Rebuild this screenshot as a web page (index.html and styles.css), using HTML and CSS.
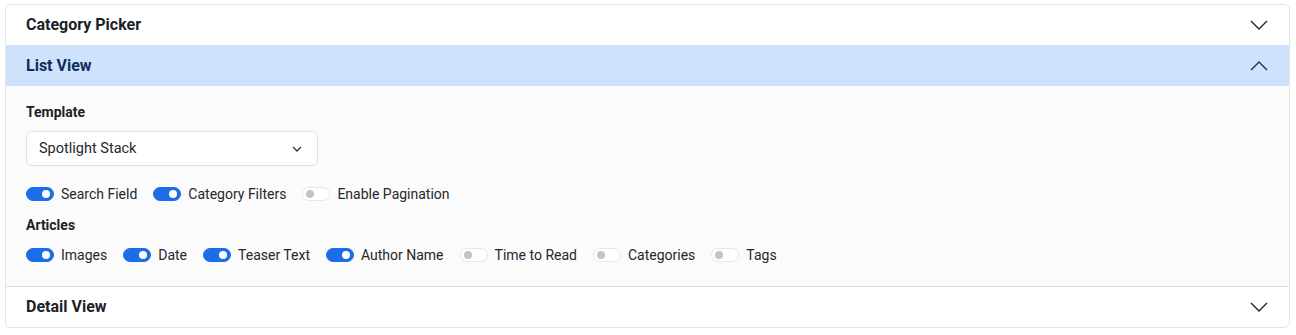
FILE: index.html
```html
<!DOCTYPE html>
<html lang="en">
  <head>
    <meta charset="UTF-8" />
    <meta name="viewport" content="width=device-width, initial-scale=1.0" />
    <title>Settings</title>
    <link rel="stylesheet" href="styles.css">
  </head>
  <body>
    <div class="panel">
      <!-- category picker -->
      <div class="section">
        <div class="head">
          <span>Category Picker</span>
          <svg class="chev" viewBox="0 0 18 10" width="18" height="10"><path d="M1 1l8 8 8-8" /></svg>
        </div>
      </div>
      <!-- list view -->
      <div class="section open">
        <div class="head">
          <span>List View</span>
          <svg class="chev" viewBox="0 0 18 10" width="18" height="10"><path d="M1 9l8-8 8 8" /></svg>
        </div>
        <div class="body">
          <div class="label">Template</div>
          <div class="select">
            <span>Spotlight Stack</span>
            <svg viewBox="0 0 10 6" width="10" height="6"><path d="M1 1l4 4 4-4" /></svg>
          </div>
          <div class="toggles">
            <label class="item"><span class="switch on"></span>Search Field</label>
            <label class="item"><span class="switch on"></span>Category Filters</label>
            <label class="item"><span class="switch"></span>Enable Pagination</label>
          </div>
          <div class="label articles">Articles</div>
          <div class="toggles">
            <label class="item"><span class="switch on"></span>Images</label>
            <label class="item"><span class="switch on"></span>Date</label>
            <label class="item"><span class="switch on"></span>Teaser Text</label>
            <label class="item"><span class="switch on"></span>Author Name</label>
            <label class="item"><span class="switch"></span>Time to Read</label>
            <label class="item"><span class="switch"></span>Categories</label>
            <label class="item"><span class="switch"></span>Tags</label>
          </div>
        </div>
      </div>
      <!-- detail view -->
      <div class="section">
        <div class="head">
          <span>Detail View</span>
          <svg class="chev" viewBox="0 0 18 10" width="18" height="10"><path d="M1 1l8 8 8-8" /></svg>
        </div>
      </div>
    </div>
  </body>
</html>
```

FILE: styles.css
```css
* {
  margin: 0;
  padding: 0;
  box-sizing: border-box;
}
body {
  padding: 4px 6px 0 5px;
  background-color: #fff;
  font-family: Roboto, "Liberation Sans", sans-serif;
  color: #1f2328;
}
.panel {
  border: 1px solid #e3e5e8;
  border-radius: 6px;
  overflow: hidden;
  background-color: #fff;
}
.open + .section {
  border-top: 1px solid #dcdfe3;
}
.head {
  display: flex;
  justify-content: space-between;
  align-items: center;
  height: 40px;
  padding: 0 21px 0 20px;
  font-size: 16px;
  line-height: 20px;
  font-weight: 700;
  color: #1d2127;
}
.open .head {
  height: 41px;
  background-color: #cfe2fc;
  color: #0f2c5e;
}
.chev path {
  fill: none;
  stroke: #22262b;
  stroke-width: 1.4;
}
.open .chev path {
  stroke: #18305a;
}
.body {
  background-color: #fbfbfb;
  padding: 18px 20px 23px;
}
.label {
  font-size: 14px;
  font-weight: 700;
  color: #1d2127;
  line-height: 16px;
}
.select {
  display: flex;
  justify-content: space-between;
  align-items: center;
  width: 292px;
  height: 35px;
  margin-top: 11px;
  padding: 0 15px 0 12px;
  background-color: #fff;
  border: 1px solid #dfe1e4;
  border-radius: 6px;
  font-size: 14.5px;
  color: #24282d;
}
.select path {
  fill: none;
  stroke: #30343a;
  stroke-width: 1.3;
}
.toggles {
  display: flex;
  align-items: center;
  gap: 16px;
  margin-top: 20px;
}
.articles {
  margin-top: 15px;
}
.articles + .toggles {
  margin-top: 14px;
}
.item {
  display: flex;
  align-items: center;
  gap: 7px;
  font-size: 14px;
  color: #24282d;
  line-height: 16px;
}
.switch {
  position: relative;
  width: 28px;
  height: 14px;
  border-radius: 7px;
  background-color: #fff;
  border: 1px solid #e6e7e9;
}
.switch::after {
  content: "";
  position: absolute;
  top: 2px;
  left: 3px;
  width: 8px;
  height: 8px;
  border-radius: 50%;
  background-color: #c4c4c4;
}
.switch.on {
  background-color: #1b6ee8;
  border-color: #1b6ee8;
}
.switch.on::after {
  left: auto;
  right: 3px;
  background-color: #fff;
}
```
